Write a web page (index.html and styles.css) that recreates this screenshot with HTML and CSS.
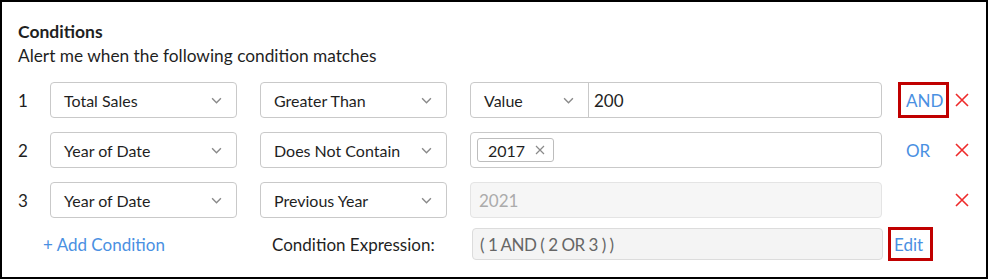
FILE: index.html
```html
<!DOCTYPE html>
<html lang="en">
  <head>
    <meta charset="UTF-8" />
    <title>Conditions</title>
    <link rel="stylesheet" href="styles.css">
  </head>
  <body>
    <div class="panel">
      <div class="title">Conditions</div>
      <div class="subtitle">Alert me when the following condition matches</div>

      <div class="rows">
        <div class="row">
          <span class="num">1</span>
          <div class="select col_field">
            <span>Total Sales</span>
            <svg class="chev" viewBox="0 0 10 6"><path d="M1 1l4 4 4-4" /></svg>
          </div>
          <div class="select col_field">
            <span>Greater Than</span>
            <svg class="chev" viewBox="0 0 10 6"><path d="M1 1l4 4 4-4" /></svg>
          </div>
          <div class="value">
            <div class="value_type">
              <span>Value</span>
              <svg class="chev" viewBox="0 0 10 6"><path d="M1 1l4 4 4-4" /></svg>
            </div>
            <div class="value_text">200</div>
          </div>
          <a class="logic marked">AND</a>
          <svg class="remove" viewBox="0 0 14 14"><path d="M1 1L13 13M13 1L1 13" /></svg>
        </div>

        <div class="row">
          <span class="num">2</span>
          <div class="select col_field">
            <span>Year of Date</span>
            <svg class="chev" viewBox="0 0 10 6"><path d="M1 1l4 4 4-4" /></svg>
          </div>
          <div class="select col_field">
            <span>Does Not Contain</span>
            <svg class="chev" viewBox="0 0 10 6"><path d="M1 1l4 4 4-4" /></svg>
          </div>
          <div class="value tags">
            <span class="tag">
              2017
              <svg class="tag_x" viewBox="0 0 10 10"><path d="M1 1L9 9M9 1L1 9" /></svg>
            </span>
          </div>
          <a class="logic">OR</a>
          <svg class="remove" viewBox="0 0 14 14"><path d="M1 1L13 13M13 1L1 13" /></svg>
        </div>

        <div class="row">
          <span class="num">3</span>
          <div class="select col_field">
            <span>Year of Date</span>
            <svg class="chev" viewBox="0 0 10 6"><path d="M1 1l4 4 4-4" /></svg>
          </div>
          <div class="select col_field">
            <span>Previous Year</span>
            <svg class="chev" viewBox="0 0 10 6"><path d="M1 1l4 4 4-4" /></svg>
          </div>
          <div class="value disabled">2021</div>
          <span class="logic"></span>
          <svg class="remove" viewBox="0 0 14 14"><path d="M1 1L13 13M13 1L1 13" /></svg>
        </div>
      </div>

      <div class="footer">
        <a class="add_condition">+ Add Condition</a>
        <span class="expr_label">Condition Expression:</span>
        <div class="expr">( 1 AND ( 2 OR 3 ) )</div>
        <a class="edit marked">Edit</a>
      </div>
    </div>
  </body>
</html>
```

FILE: styles.css
```css
body {
  margin: 0;
  background-color: #fff;
}
.panel {
  width: 988px;
  height: 279px;
  box-sizing: border-box;
  border: 2px solid #000;
  padding: 18px 16px 0 16px;
  font-family: Lato, "Noto Sans", sans-serif;
  color: #1f1f1f;
}
.title {
  font-size: 17.5px;
  font-weight: 700;
  line-height: 24px;
}
.subtitle {
  font-size: 17.3px;
  line-height: 24px;
}

/* condition rows */
.rows {
  display: flex;
  flex-direction: column;
  gap: 14px;
  margin-top: 14px;
}
.row {
  display: flex;
  align-items: center;
  height: 36px;
}
.num {
  width: 32px;
  font-size: 17px;
}
.select {
  display: flex;
  align-items: center;
  justify-content: space-between;
  box-sizing: border-box;
  height: 36px;
  border: 1px solid #c9c9c9;
  border-radius: 4px;
  padding: 0 14px 0 13px;
  font-size: 16px;
}
.col_field {
  width: 187px;
  margin-right: 23px;
}
.chev {
  width: 11px;
  height: 7px;
  fill: none;
  stroke: #8a8a8a;
  stroke-width: 1.3;
}
.value {
  display: flex;
  align-items: center;
  box-sizing: border-box;
  width: 412px;
  height: 36px;
  border: 1px solid #c9c9c9;
  border-radius: 4px;
  font-size: 17px;
}
.value_type {
  display: flex;
  align-items: center;
  justify-content: space-between;
  box-sizing: border-box;
  width: 118px;
  height: 100%;
  padding: 0 14px 0 13px;
  border-right: 1px solid #c9c9c9;
  font-size: 16px;
}
.value_text {
  padding-left: 5px;
}
.tags {
  padding-left: 6px;
}
.tag {
  display: flex;
  align-items: center;
  gap: 10px;
  height: 24px;
  box-sizing: border-box;
  border: 1px solid #bdbdbd;
  border-radius: 3px;
  padding: 0 8px 0 10px;
  font-size: 16px;
}
.tag_x {
  width: 10px;
  height: 10px;
  fill: none;
  stroke: #8a8a8a;
  stroke-width: 1.2;
}
.disabled {
  background-color: #f6f6f6;
  border-color: #e4e4e4;
  color: #ababab;
  padding-left: 8px;
}
.logic {
  display: flex;
  align-items: center;
  box-sizing: border-box;
  width: 51px;
  height: 36px;
  margin-left: 16px;
  padding-left: 5px;
  border: 3px solid transparent;
  color: #4a90e2;
  font-size: 17px;
}
.marked {
  border-color: #c00000;
}
.remove {
  width: 14px;
  height: 14px;
  margin-left: 6px;
  fill: none;
  stroke: #ee2a2a;
  stroke-width: 1.6;
}

/* expression line */
.footer {
  display: flex;
  align-items: center;
  margin-top: 9px;
  height: 34px;
  font-size: 17px;
}
.add_condition {
  width: 254px;
  padding-left: 25px;
  box-sizing: border-box;
  color: #4a90e2;
}
.expr_label {
  width: 200px;
}
.expr {
  display: flex;
  align-items: center;
  box-sizing: border-box;
  width: 411px;
  height: 32px;
  padding-left: 7px;
  background-color: #f4f4f4;
  border: 1px solid #dcdcdc;
  border-radius: 4px;
  color: #666;
  font-size: 17px;
  letter-spacing: -0.5px;
}
.edit {
  display: flex;
  align-items: center;
  box-sizing: border-box;
  height: 34px;
  margin-left: 5px;
  padding: 0 7px 0 3px;
  border: 3px solid #c00000;
  color: #4a90e2;
}
```
